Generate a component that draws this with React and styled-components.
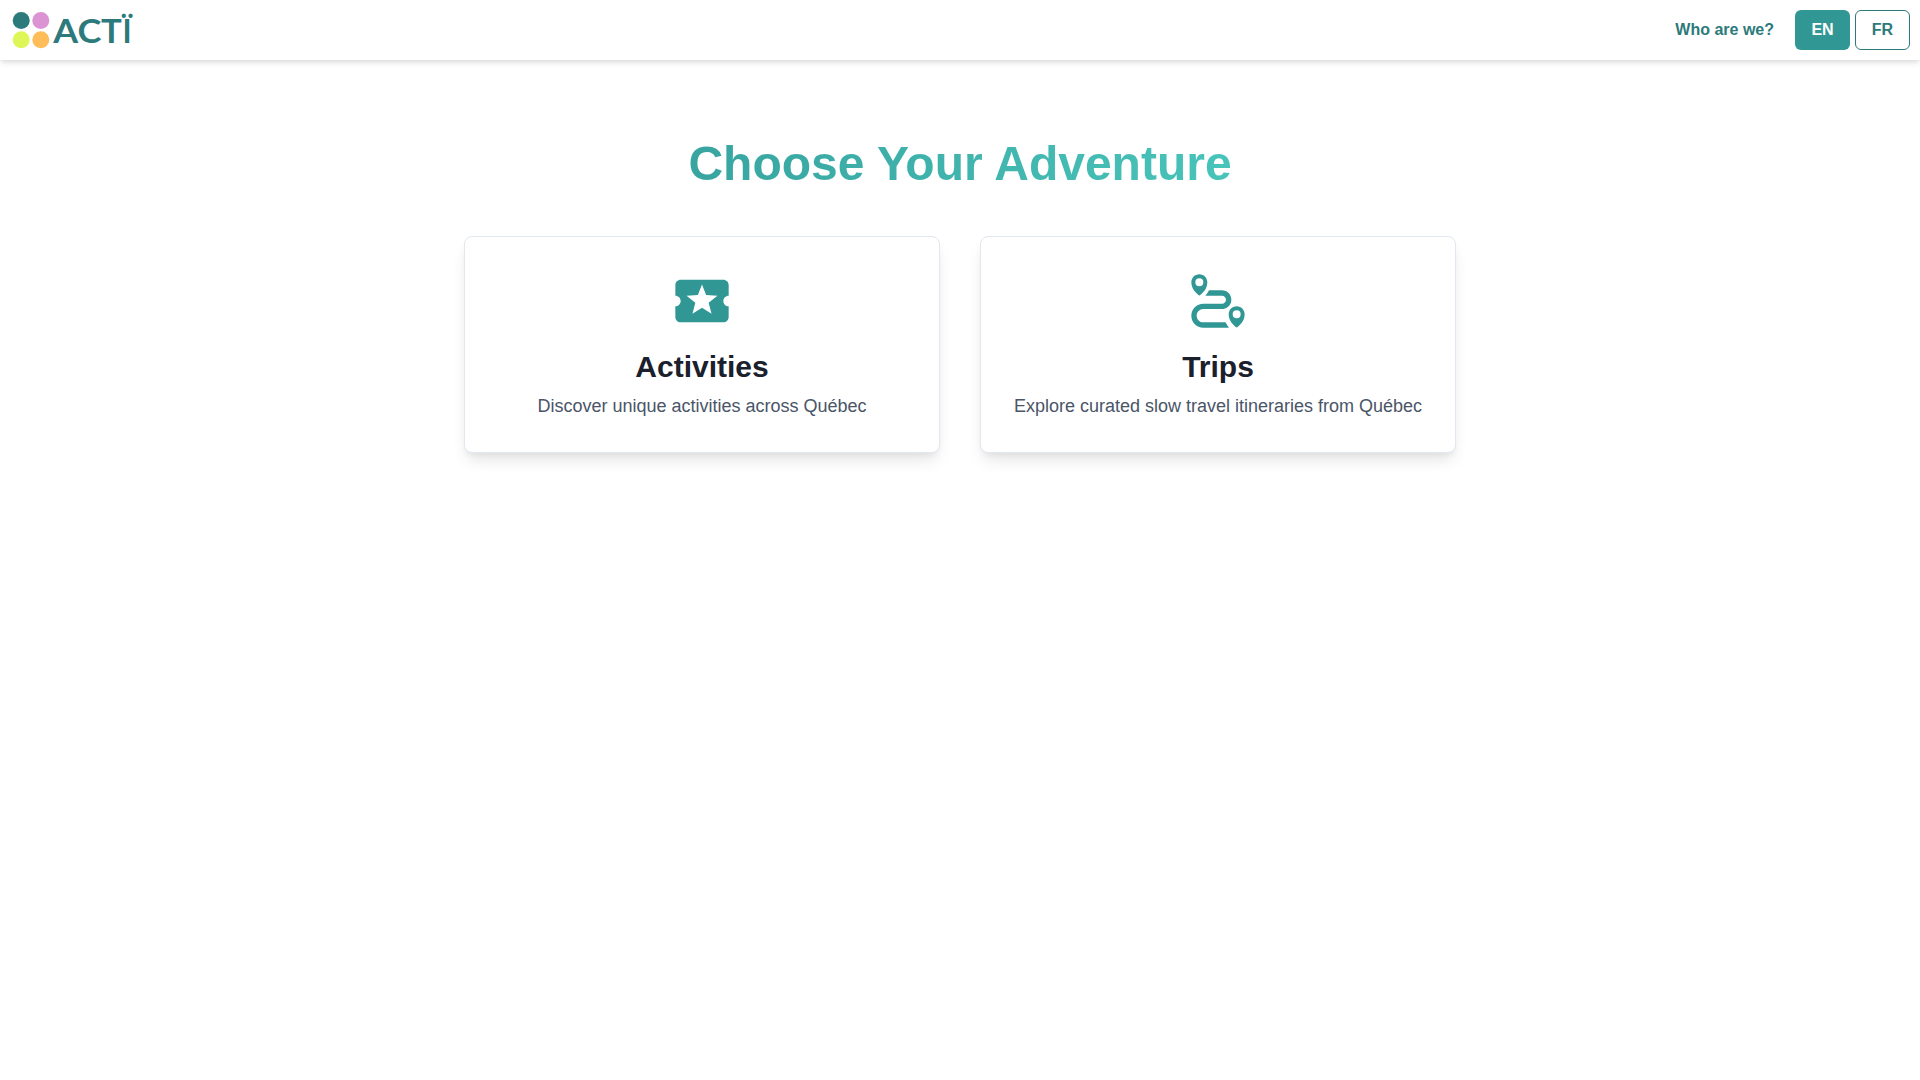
import React from "react";
import styled, { createGlobalStyle } from "styled-components";
import { MdLocalActivity } from "react-icons/md";
import { BiTrip } from "react-icons/bi";

const sections = [
  {
    title: "Activities",
    text: "Discover unique activities across Québec",
    icon: MdLocalActivity,
  },
  {
    title: "Trips",
    text: "Explore curated slow travel itineraries from Québec",
    icon: BiTrip,
  },
];

function Logo() {
  return (
    <LogoSvg viewBox='0 0 130 40' role='img' aria-label='ACTÏ'>
      <circle cx='11.2' cy='10.4' r='8.5' fill='#2c7a7b' />
      <circle cx='30.8' cy='10.4' r='8.5' fill='#dc93d4' />
      <circle cx='11.2' cy='29.8' r='8.5' fill='#def658' />
      <circle cx='30.8' cy='29.8' r='8.5' fill='#ffbd59' />
      <g fill='#2c7a7b'>
        <text transform='translate(43.2 33) scale(1.12 1)'>A</text>
        <text transform='translate(67.5 33) scale(1.13 1)'>C</text>
        <text transform='translate(91.1 33) scale(1.08 1)'>T</text>
        <text transform='translate(112.4 33) scale(0.96 1)'>Ï</text>
      </g>
    </LogoSvg>
  );
}

function Navbar() {
  return (
    <Nav>
      <Logo />
      <NavLinks>
        <NavButton>Who are we?</NavButton>
        <LangButton $active>EN</LangButton>
        <LangButton>FR</LangButton>
      </NavLinks>
    </Nav>
  );
}

function App() {
  return (
    <>
      <GlobalStyle />
      <Page>
        <Navbar />
        <Main>
          <Title>Choose Your Adventure</Title>
          <Cards>
            {sections.map(({ title, text, icon: Icon }) => (
              <Card key={title}>
                <Icon size={64} color='#319795' />
                <CardTitle>{title}</CardTitle>
                <CardText>{text}</CardText>
              </Card>
            ))}
          </Cards>
        </Main>
      </Page>
    </>
  );
}

export default App;

const GlobalStyle = createGlobalStyle`
  * {
    box-sizing: border-box;
  }
  body {
    margin: 0;
    background: white;
    color: #1a202c;
    font-family: "Liberation Sans", Arial, sans-serif;
    font-size: 16px;
    line-height: 1.5;
    text-rendering: optimizeLegibility;
    -webkit-font-smoothing: antialiased;
  }
`;

const Page = styled.div`
  min-height: 100vh;
`;

const Nav = styled.nav`
  display: flex;
  align-items: center;
  justify-content: space-between;
  height: 60px;
  padding: 10px;
  background: white;
  box-shadow: 0 4px 6px -1px rgba(0, 0, 0, 0.1),
    0 2px 4px -1px rgba(0, 0, 0, 0.06);
`;

const LogoSvg = styled.svg`
  width: 130px;
  height: 40px;
  overflow: visible;
  text {
    font-family: Lato, sans-serif;
    font-weight: 700;
    font-size: 32px;
  }
`;

const NavLinks = styled.div`
  display: flex;
  align-items: center;
  gap: 5px;
`;

const NavButton = styled.button`
  height: 40px;
  padding: 0 16px;
  border: none;
  border-radius: 6px;
  background: transparent;
  color: #2c7a7b;
  font-family: inherit;
  font-size: 16px;
  font-weight: 600;
  line-height: 1.2;
  text-rendering: inherit;
`;

const LangButton = styled(NavButton)`
  width: 55px;
  padding: 0;
  border: ${(props) => (props.$active ? "none" : "1px solid #2c7a7b")};
  background: ${(props) => (props.$active ? "#319795" : "transparent")};
  color: ${(props) => (props.$active ? "white" : "#2c7a7b")};
`;

const Main = styled.main`
  width: 992px;
  margin: 0 auto;
  padding-top: 80px;
`;

const Title = styled.h1`
  margin: 0 0 48px;
  font-size: 48px;
  font-weight: 700;
  line-height: 1;
  text-align: center;
  color: transparent;
  background: linear-gradient(to right, #319795, #4fd1c5);
  background-clip: text;
`;

const Cards = styled.div`
  display: grid;
  grid-template-columns: 1fr 1fr;
  gap: 40px;
`;

const Card = styled.div`
  display: flex;
  flex-direction: column;
  align-items: center;
  padding: 32px;
  border: 1px solid #e2e8f0;
  border-radius: 8px;
  background: white;
  text-align: center;
  box-shadow: 0 10px 15px -3px rgba(0, 0, 0, 0.1),
    0 4px 6px -2px rgba(0, 0, 0, 0.05);
`;

const CardTitle = styled.h2`
  margin: 16px 0 8px;
  font-size: 30px;
  font-weight: 700;
  line-height: 1.2;
`;

const CardText = styled.p`
  margin: 0;
  color: #4a5568;
  font-size: 18px;
  white-space: nowrap;
`;
